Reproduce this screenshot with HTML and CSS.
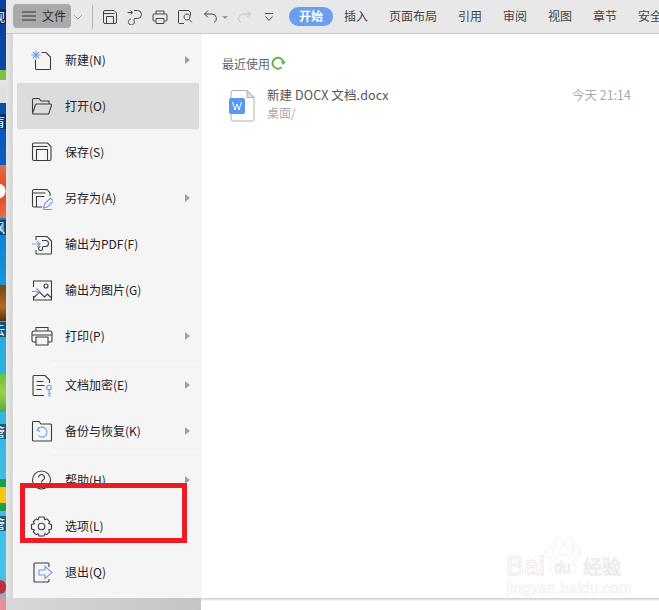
FILE: index.html
```html
<!DOCTYPE html>
<html lang="zh-CN">
<head>
<meta charset="utf-8">
<title>文件菜单</title>
<link rel="stylesheet" href="styles.css">
</head>
<body>
<div class="screen">
  <div class="desktop">
    <span class="d-label d-l1">观</span>
    <span class="d-blob d-b1"></span>
    <span class="d-label d-l2">肓</span>
    <span class="d-blob d-b2"></span>
    <span class="d-label d-l3">枫</span>
    <span class="d-blob d-b3"></span>
    <span class="d-label d-l4">云</span>
    <span class="d-blob d-b4"></span>
    <span class="d-label d-l5">管</span>
    <span class="d-blob d-b5"></span>
    <span class="d-label d-l6">管</span>
    <span class="d-blob d-b6"></span>
  </div>
  <div class="window">
    <header class="toolbar">
      <div class="file-btn">
        <svg class="tb-ham" viewBox="0 0 14 10"><path d="M0 1h14M0 5h14M0 9h14"/></svg>
        <span>文件</span>
      </div>
      <svg class="tb-chev" viewBox="0 0 10 6"><path d="M1 1l4 4 4-4"/></svg>
      <span class="tb-sep"></span>
      <svg class="tb-icon" viewBox="0 0 16 16"><path d="M3 1.500h9l2.500 2.500v9a1.500 1.500 0 0 1-1.500 1.500H3A1.500 1.500 0 0 1 1.500 13V3A1.500 1.500 0 0 1 3 1.500zM4.500 14.500v-7h7v7M1.500 4.500h11"/></svg>
      <svg class="tb-icon" viewBox="0 0 16 16"><path d="M0.500 3.500h5M3.500 1.500l2 2-2 2M7 1.500h3.500a4 4 0 0 1 0 8H8a1 1 0 0 0-1 1v1a3 3 0 1 1-3-1.500"/></svg>
      <svg class="tb-icon" viewBox="0 0 16 16"><path d="M4 5V2h8v3M3.500 12H2a1 1 0 0 1-1-1V6a1 1 0 0 1 1-1h12a1 1 0 0 1 1 1v5a1 1 0 0 1-1 1h-1.500M4 9.500h8v5H4z"/></svg>
      <svg class="tb-icon" viewBox="0 0 16 16"><path d="M7 14.500H2.500a1 1 0 0 1-1-1v-11a1 1 0 0 1 1-1h9l2 2v3M10 11a3 3 0 1 0-.01 0zM11.800 10.200l3 3"/></svg>
      <svg class="tb-icon tb-undo" viewBox="0 0 16 16"><path d="M5 1.500L1.500 5 5 8.500M1.500 5h7.500a4.500 4.500 0 0 1 2 8.500"/></svg>
      <span class="tb-caret"></span>
      <svg class="tb-icon tb-redo" viewBox="0 0 16 16"><path d="M11 1.500L14.500 5 11 8.500M14.500 5H7a4.500 4.500 0 0 0-2 8.500"/></svg>
      <svg class="tb-more" viewBox="0 0 10 10"><path d="M1 1.500h8M1.500 4.500L5 8.500l3.500-4"/></svg>
      <nav class="tabs">
        <span class="tab tab-active">开始</span>
        <span class="tab">插入</span>
        <span class="tab">页面布局</span>
        <span class="tab">引用</span>
        <span class="tab">审阅</span>
        <span class="tab">视图</span>
        <span class="tab">章节</span>
        <span class="tab">安全</span>
      </nav>
    </header>
    <div class="body">
      <aside class="menu">
        <div class="row">
          <svg class="ico" viewBox="0 0 24 24"><path d="M12.500 4.500h4.500l4.500 4.500v11.500a1 1 0 0 1-1 1H7.500a1 1 0 0 1-1-1V12"/><path class="blue" d="M7 2.500v9M2.500 7h9M3.800 3.800l6.400 6.400M10.200 3.800l-6.400 6.400"/></svg>
          <span class="lbl">新建(N)</span><i class="arr"></i>
        </div>
        <div class="row row-active">
          <svg class="ico" viewBox="0 0 24 24"><path d="M3.500 18V6a1.500 1.500 0 0 1 1.500-1.500h5l2 2.500h8v3M3.500 19.500a1 1 0 0 0 1 .5H19a1 1 0 0 0 1-.8l2.500-8a1 1 0 0 0-1-1.200H7.500a1 1 0 0 0-1 .8z"/></svg>
          <span class="lbl">打开(O)</span>
        </div>
        <div class="row">
          <svg class="ico" viewBox="0 0 24 24"><path d="M5 3h13.500l3.500 3.500V19a1.500 1.500 0 0 1-1.500 1.500H5A1.500 1.500 0 0 1 3.500 19V4.500A1.500 1.500 0 0 1 5 3zM7.500 20.500V9.500h11v11M3.500 6.500h15"/></svg>
          <span class="lbl">保存(S)</span>
        </div>
        <div class="row">
          <svg class="ico" viewBox="0 0 24 24"><path d="M13 21H5a1.500 1.500 0 0 1-1.500-1.500V5A1.500 1.500 0 0 1 5 3.500h13l3 3.500v3M7.500 21V10.500h8M3.500 7h13"/><path class="blue" d="M14 23.500h9M14.500 22l1-4 6-6 3 3-6 6z"/></svg>
          <span class="lbl">另存为(A)</span><i class="arr"></i>
        </div>
        <div class="row">
          <svg class="ico" viewBox="0 0 24 24"><path d="M7 8V4.500h11l4.500 4.500v12a1 1 0 0 1-1 1H8a1 1 0 0 1-1-1v-3"/><path d="M13 8.500h3.500a3 3 0 0 1 0 6h-2a1 1 0 0 0-1 1v.5a2 2 0 1 1-2-1.500"/><path class="blue" d="M3 12h8M8 9l3 3-3 3"/></svg>
          <span class="lbl">输出为PDF(F)</span>
        </div>
        <div class="row">
          <svg class="ico" viewBox="0 0 24 24"><path d="M4.500 9V3h18v19h-18v-4M4.500 20l6-6 5 5 3-3 4 4"/><circle cx="17" cy="8" r="2"/><path class="blue" d="M3 13.500h7M7.500 10.500l3 3-3 3"/></svg>
          <span class="lbl">输出为图片(G)</span>
        </div>
        <div class="row">
          <svg class="ico" viewBox="0 0 24 24"><path d="M7 7V3.500h12V7M6.500 18H4.500A1.500 1.500 0 0 1 3 16.500V9a2 2 0 0 1 2-2h16a2 2 0 0 1 2 2v7.500a1.500 1.500 0 0 1-1.500 1.500h-2M7 13h12v8H7zM3 11h20"/></svg>
          <span class="lbl">打印(P)</span><i class="arr"></i>
        </div>
        <div class="sep"></div>
        <div class="row">
          <svg class="ico" viewBox="0 0 24 24"><path d="M20.500 10V7L16 2.500H5A1 1 0 0 0 4 3.500v18a1 1 0 0 0 1 1h10M7.500 8.500h7M7.500 12.500h8M7.500 16.500h5"/><circle class="blue" cx="20" cy="14.500" r="2.300"/><path class="blue" d="M20 17v6M20 20.500h2M20 23h2"/></svg>
          <span class="lbl">文档加密(E)</span><i class="arr"></i>
        </div>
        <div class="row">
          <svg class="ico" viewBox="0 0 24 24"><path d="M3.500 21a1 1 0 0 0 1 1h17a1 1 0 0 0 1-1V6a1 1 0 0 0-1-1H12L10 2.500H4.500a1 1 0 0 0-1 1z"/><path class="blue" d="M10 8l-2 3 3 1.500M8.500 11a5 5 0 1 1 .8 5.500"/></svg>
          <span class="lbl">备份与恢复(K)</span><i class="arr"></i>
        </div>
        <div class="sep"></div>
        <div class="row">
          <svg class="ico" viewBox="0 0 24 24"><circle cx="12.500" cy="12" r="9"/><path d="M9.500 9.500a3 3 0 1 1 4.500 2.600c-1 .6-1.500 1.200-1.500 2.400M12.500 16v1.500"/></svg>
          <span class="lbl">帮助(H)</span><i class="arr"></i>
        </div>
        <div class="row">
          <svg class="ico" viewBox="0 0 24 24"><path d="M10 3h5l.8 2.800 2-1 2.900 2.900-1 2 2.800.8v4.500l-2.800.8 1 2-2.900 2.900-2-1L15 22h-5l-.8-2.300-2 1-2.900-2.900 1-2-2.800-.8v-4.500l2.800-.8-1-2 2.900-2.900 2 1z"/><circle cx="12.500" cy="12.500" r="3.300"/></svg>
          <span class="lbl">选项(L)</span>
        </div>
        <div class="row">
          <svg class="ico" viewBox="0 0 24 24"><path d="M20 7V4.500L19 3H6a1 1 0 0 0-1 1v17a1 1 0 0 0 1 1h13l1-1v-2"/><path class="blue" d="M10 10h6V6.500l7 6-7 6V15h-6z"/></svg>
          <span class="lbl">退出(Q)</span>
        </div>
      </aside>
      <main class="main">
        <div class="recent-title">
          <span>最近使用</span>
          <svg class="refresh" viewBox="0 0 16 16"><path d="M13.500 8a5.500 5.500 0 1 0-1.800 4.300"/><path class="refresh-tip" d="M10.500 6.500h5.500l-2.700 3.500z"/></svg>
        </div>
        <div class="file">
          <svg class="file-icon" viewBox="0 0 26 32">
            <path class="page" d="M4 .5h14L25 7.500V29a2 2 0 0 1-2 2H4a2 2 0 0 1-2-2V2.500a2 2 0 0 1 2-2z"/>
            <path class="fold" d="M18 .5v7h7z"/>
            <rect class="badge" y="8" width="16" height="16" rx="2"/>
            <path class="badge-w" d="M3.500 12l2.500 8 2-6 2 6 2.500-8"/>
          </svg>
          <div class="file-text">
            <div class="file-name">新建 DOCX 文档.docx</div>
            <div class="file-path">桌面/</div>
          </div>
          <div class="file-time">今天 21:14</div>
        </div>
      </main>
    </div>
    <div class="foot"><div class="foot-left"></div><div class="foot-right"></div></div>
  </div>
  <div class="red-box"></div>
  <div class="watermark">
    <span class="wm-bai">Bai</span>
    <svg class="wm-paw" viewBox="0 0 36 42">
      <ellipse cx="4" cy="15" rx="4" ry="6"/>
      <ellipse cx="13" cy="6" rx="4.500" ry="6"/>
      <ellipse cx="24" cy="6" rx="4.500" ry="6"/>
      <ellipse cx="32" cy="15" rx="4" ry="6"/>
      <path d="M18 17c-6 0-8 6-12 10-4 5-1 11 5 11 3 0 5-1 7-1s4 1 7 1c6 0 9-6 5-11-4-4-6-10-12-10z"/>
    </svg>
    <span class="wm-du">du</span>
    <span class="wm-jy">经验</span>
    <span class="wm-url">jingyan.baidu.com</span>
  </div>
</div>
</body>
</html>
```
FILE: styles.css
```css
* { box-sizing: border-box; }
html, body { margin: 0; padding: 0; height: 100%; background: #fff; overflow: hidden; }
body { font-family: "Noto Sans CJK SC", "Noto Sans", sans-serif; font-size: 12px; color: #333; }

.screen { position: relative; display: flex; width: 659px; height: 610px; overflow: hidden; }

/* desktop peeking out at the left */
.desktop {
  position: relative;
  flex: 0 0 6px;
  overflow: hidden;
  background: linear-gradient(#0a3f9a 0, #0a50b0 110px, #0b62c4 170px, #0d86d6 240px, #1a9cd8 300px, #29aede 350px, #3cbde4 480px, #45c2e6 590px, #e8909a 600px);
}
.d-label { position: absolute; left: -7px; width: 14px; font-size: 12px; line-height: 15px; color: #fff; background: rgba(0,20,50,.55); }
.d-l1 { top: 9px; }
.d-l2 { top: 114px; }
.d-l3 { top: 220px; }
.d-l4 { top: 322px; }
.d-l5 { top: 424px; }
.d-l6 { top: 516px; }
.d-blob { position: absolute; left: 0; width: 6px; }
.d-b1 { top: 70px; height: 33px; background: linear-gradient(#7cc242 0, #7cc242 30%, #e6e6e6 30%, #dcdcdc 100%); }
.d-b2 { top: 165px; height: 53px; background: radial-gradient(circle at -2px 26px, #fff 0, #fff 7px, #e0502c 8px, #e87048 100%); }
.d-b3 { top: 285px; height: 36px; background: linear-gradient(#7a4414, #b06a20 60%, #5a3010); }
.d-b4 { top: 374px; height: 38px; background: linear-gradient(#6cc040, #9ad050 50%, #50a840); }
.d-b5 { top: 479px; height: 32px; background: linear-gradient(#18a050 0, #18a050 25%, #f2c80c 25%, #f2c80c 75%, #18a050 75%); }
.d-b6 { top: 580px; height: 14px; background: #c0303c; border-radius: 0 7px 7px 0; }

/* window */
.window { flex: 1; min-width: 0; display: flex; flex-direction: column; background: #e6e6e6; }

.toolbar {
  flex: 0 0 34px;
  display: flex;
  align-items: center;
  padding-left: 7px;
  background: #e8e8e8;
  border-bottom: 1px solid #c9c9c9;
  white-space: nowrap;
  overflow: hidden;
}
.toolbar > * { flex: none; }
.file-btn {
  display: flex; align-items: center; gap: 6px;
  width: 58px; height: 24px; padding-left: 9px;
  margin-top: -1px;
  background: #a9a9a9; border-radius: 4px; color: #2b2b2b;
}
.file-btn span { padding-bottom: 2px; }
.tb-ham { width: 14px; height: 10px; fill: none; stroke: #333; stroke-width: 1; }
.tb-chev { width: 10px; height: 6px; margin-left: 2px; fill: none; stroke: #a0a0a0; stroke-width: 1; }
.tb-sep { width: 1px; height: 24px; margin-left: 9px; background: #b4b4b4; }
.tb-icon { width: 16px; height: 16px; margin-left: 9px; fill: none; stroke: #444; stroke-width: 1; }
.tb-sep + .tb-icon { margin-left: 9px; }
.tb-undo { margin-left: 10px; }
.tb-caret { width: 0; height: 0; margin-left: 3px; margin-top: 1px; border: 3px solid transparent; border-top: 3px solid #999; border-bottom: 0; }
.tb-redo { margin-left: 8px; stroke: #c0c0c0; }
.tb-more { width: 10px; height: 10px; margin-left: 12px; fill: none; stroke: #555; stroke-width: 1; }
.tabs { display: flex; align-items: center; gap: 21px; margin-left: 15px; color: #444; }
.tab { flex: none; line-height: 17px; padding-bottom: 2px; }
.tab-active { margin-right: -10px; padding: 0 10px 2px; background: #6a9eee; color: #fff; font-weight: 700; border-radius: 10px; width: 44px; height: 19px; text-align: center; margin-top: -1px; }

.body { flex: 1; min-height: 0; display: flex; padding-left: 8px; background: linear-gradient(90deg, #e6e6e6, #d4d4d4 7px, #fff 7px); }
.menu {
  flex: 0 0 188px;
  padding: 3px;
  background: #f5f5f5;
  box-shadow: -1px 0 0 #fff;
}
.row { display: flex; align-items: center; height: 46px; padding: 0 9px 0 12px; color: #222; }
.row-active { background: #dcdcdc; }
.ico { flex: 0 0 24px; width: 24px; height: 24px; margin-right: 12px; fill: none; stroke: #3c3c3c; stroke-width: 1.100; }
.ico .blue { stroke: #6e9fe6; }
.lbl { flex: 1; white-space: nowrap; padding-bottom: 2px; }
.arr { width: 0; height: 0; border: 4px solid transparent; border-left: 5px solid #a0a0a0; border-right: 0; }
.sep { height: 3px; margin-left: 35px; border-top: 1px solid #efefef; margin-top: 1px; margin-bottom: -1px; }

.main { flex: 1; min-width: 0; padding: 19px 28px 0 20px; background: #fff; }
.recent-title { display: flex; align-items: center; height: 20px; color: #666; }
.refresh { width: 16px; height: 16px; fill: none; stroke: #6bb04a; stroke-width: 2; }
.refresh-tip { fill: #6bb04a; stroke: none; }
.file { display: flex; align-items: flex-start; margin-top: 13px; padding-left: 7px; }
.file-icon { flex: 0 0 26px; width: 26px; height: 32px; margin-top: 4px; }
.page { fill: #fff; stroke: #b0b0b0; }
.fold { fill: #e0e0e0; stroke: #b0b0b0; }
.badge { fill: #5b96f0; }
.badge-w { fill: none; stroke: #fff; stroke-width: 1; }
.file-text { flex: 1; margin-left: 12px; }
.file-name { font-size: 12.500px; letter-spacing: .1px; line-height: 18px; color: #555; }
.file-path { line-height: 18px; color: #aaa; }
.file-time { font-size: 12.500px; color: #aaa; line-height: 18px; }

.foot { flex: 0 0 12px; display: flex; }
.foot-left { flex: 0 0 195px; background: linear-gradient(90deg, #d8d8d8, #c4c4c4); }
.foot-right { flex: 1; background: linear-gradient(#cfcfcf 0, #e8e8e8 2px, #fff 3px); }

/* annotation over the screenshot */
.red-box { position: absolute; left: 20px; top: 483px; width: 167px; height: 60px; border: 5px solid #ed1c24; }

/* watermark */
.watermark { position: absolute; left: 506px; top: 538px; width: 135px; height: 62px; font-family: "Liberation Sans", sans-serif; color: #fff; -webkit-text-stroke: 1px #ececec; }
.wm-bai { position: absolute; left: 0; top: 16px; font-size: 27px; line-height: 24px; }
.wm-paw { position: absolute; left: 39px; top: 0; width: 36px; height: 40px; fill: #fff; stroke: #ececec; stroke-width: 1; }
.wm-du { position: absolute; left: 48px; top: 21px; font-size: 15px; line-height: 15px; }
.wm-jy { position: absolute; left: 77px; top: 16px; font-family: "Noto Sans CJK SC", sans-serif; font-size: 19px; line-height: 24px; }
.wm-url { position: absolute; left: 0; top: 42px; font-size: 15px; line-height: 16px; -webkit-text-stroke: .5px #ececec; letter-spacing: .3px; }
```
